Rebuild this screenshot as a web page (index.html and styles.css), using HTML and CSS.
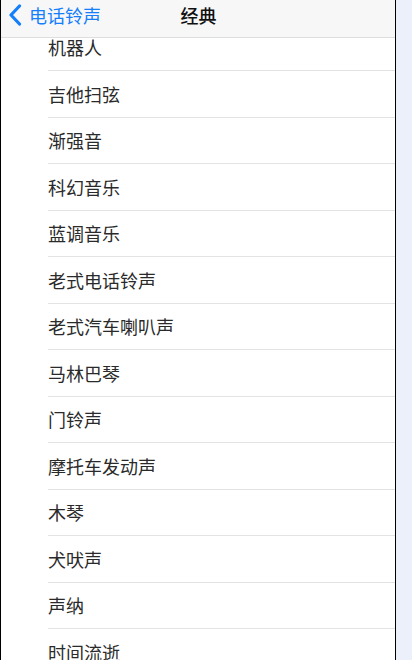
FILE: index.html
```html
<!DOCTYPE html>
<html lang="zh">
<head>
<meta charset="utf-8">
<link rel="stylesheet" href="styles.css">
</head>
<body>
<div class="phone">
  <header class="navbar">
    <a class="back">
      <svg class="chev" width="14" height="22" viewBox="0 0 14 22"><path d="M11.5 2 L3 11 L11.5 20" fill="none" stroke="#147efb" stroke-width="3.2" stroke-linecap="round" stroke-linejoin="round"/></svg>
      <span>电话铃声</span>
    </a>
    <div class="title">经典</div>
  </header>
  <ul class="list">
    <li>机器人</li>
    <li>吉他扫弦</li>
    <li>渐强音</li>
    <li>科幻音乐</li>
    <li>蓝调音乐</li>
    <li>老式电话铃声</li>
    <li>老式汽车喇叭声</li>
    <li>马林巴琴</li>
    <li>门铃声</li>
    <li>摩托车发动声</li>
    <li>木琴</li>
    <li>犬吠声</li>
    <li>声纳</li>
    <li>时间流逝</li>
  </ul>
</div>
</body>
</html>
```
FILE: styles.css
```css
html, body {
  margin: 0;
  padding: 0;
  height: 660px;
  overflow: hidden;
  background: #ebf0fa;
  font-family: "Noto Sans CJK SC", "Noto Sans", sans-serif;
}
.phone {
  width: 394px;
  height: 660px;
  background: #fff;
  border-left: 1px solid #000;
  border-right: 1px solid #000;
  position: relative;
  overflow: hidden;
}
.navbar {
  position: absolute;
  top: 0;
  left: -1px;
  width: 395px;
  height: 37px;
  background: #f7f7f7;
  border-bottom: 1px solid #dedede;
  display: flex;
  align-items: center;
  justify-content: center;
  z-index: 2;
}
.back {
  position: absolute;
  left: 8px;
  top: 0;
  height: 30px;
  display: flex;
  align-items: center;
  gap: 7px;
  color: #147efb;
  font-size: 18px;
}
.chev { display: block; }
.title {
  font-size: 18px;
  font-weight: 500;
  color: #111;
  margin-top: -7px;
  padding-left: 2px;
}
.list {
  list-style: none;
  margin: 0;
  padding: 24.5px 0 0 47px;
}
.list li {
  box-sizing: border-box;
  height: 46.5px;
  border-bottom: 1px solid #e3e3e3;
  display: flex;
  align-items: center;
  font-size: 18px;
  color: #2a2a2a;
}
```
